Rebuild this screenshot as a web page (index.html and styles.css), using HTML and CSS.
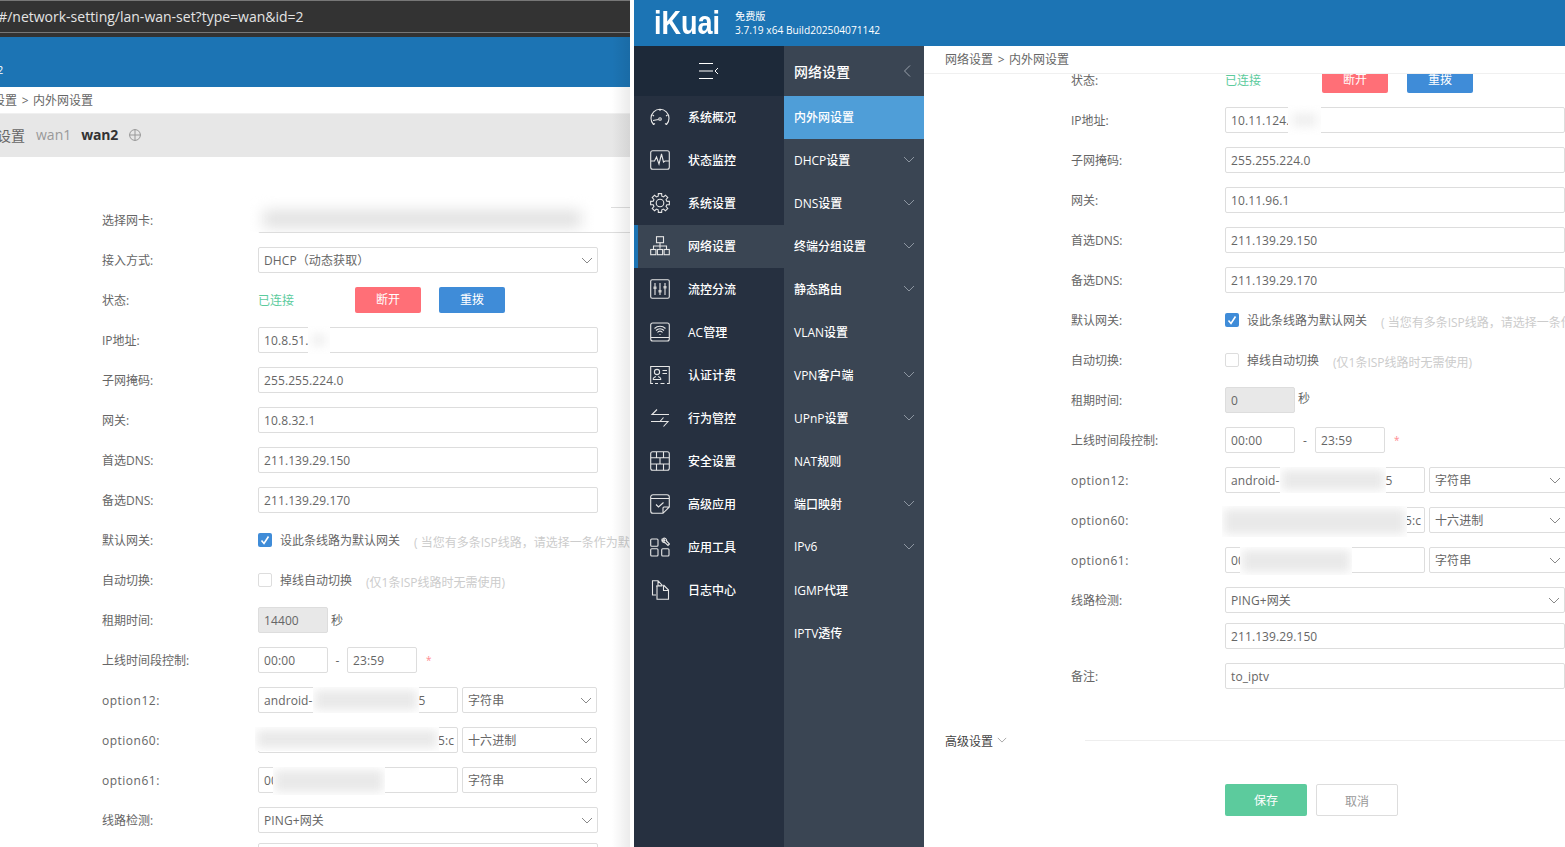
FILE: index.html
```html
<!DOCTYPE html>
<html lang="zh-CN">
<head>
    <meta charset="UTF-8">
    <title>iKuai 内外网设置</title>
    <link rel="stylesheet" href="styles.css">
</head>
<body>
    <svg class="defs" width="0" height="0">
        <symbol id="chev" viewBox="0 0 12 7"><path d="M1 1l5 5 5-5" fill="none" stroke="currentColor"/></symbol>
    </svg>

    <div class="win-left">
        <div class="urlbar"><span class="url">/#/network-setting/lan-wan-set?type=wan&amp;id=2</span></div>
        <div class="bluebar"><span class="bluebar-text">2</span></div>
        <div class="crumb crumb-cut">网络设置 <span class="crumb-sep">&gt;</span> 内外网设置</div>
        <div class="tabs">
            <span class="tab-title">内外网设置</span>
            <span class="tab">wan1</span>
            <span class="tab tab-on">wan2</span>
            <svg class="tab-add" width="12" height="12" viewBox="0 0 12 12"><circle cx="6" cy="6" r="5.4" fill="none" stroke="#999"/><path d="M6 0v12M0 6h12" stroke="#999"/></svg>
        </div>
        <div class="form">
            <div class="row">
                <div class="lbl">选择网卡:</div>
                <div class="input input-wide"><div class="mask mask-nic"></div></div>
            </div>
            <div class="row">
                <div class="lbl">接入方式:</div>
                <div class="select select-full">DHCP（动态获取）<svg class="arrow"><use href="#chev"/></svg></div>
            </div>
            <div class="row">
                <div class="lbl">状态:</div>
                <span class="state">已连接</span>
                <span class="btn btn-red">断开</span>
                <span class="btn btn-blue">重拨</span>
            </div>
            <div class="row">
                <div class="lbl">IP地址:</div>
                <div class="input">10.8.51.<div class="mask mask-ip-l"></div></div>
            </div>
            <div class="row"><div class="lbl">子网掩码:</div><div class="input">255.255.224.0</div></div>
            <div class="row"><div class="lbl">网关:</div><div class="input">10.8.32.1</div></div>
            <div class="row"><div class="lbl">首选DNS:</div><div class="input">211.139.29.150</div></div>
            <div class="row"><div class="lbl">备选DNS:</div><div class="input">211.139.29.170</div></div>
            <div class="row">
                <div class="lbl">默认网关:</div>
                <span class="check check-on"><svg width="14" height="14" viewBox="0 0 14 14"><path d="M3.5 7.5l2.5 3 4.5-7" fill="none" stroke="#fff" stroke-width="1.6"/></svg></span>
                <span class="check-text">设此条线路为默认网关</span>
                <span class="hint">( 当您有多条ISP线路，请选择一条作为默认网关</span>
            </div>
            <div class="row">
                <div class="lbl">自动切换:</div>
                <span class="check"></span>
                <span class="check-text">掉线自动切换</span>
                <span class="hint">(仅1条ISP线路时无需使用)</span>
            </div>
            <div class="row">
                <div class="lbl">租期时间:</div>
                <div class="input input-short input-off">14400</div>
                <span class="unit">秒</span>
            </div>
            <div class="row">
                <div class="lbl">上线时间段控制:</div>
                <div class="input input-short">00:00</div>
                <span class="dash">-</span>
                <div class="input input-short">23:59</div>
                <span class="star">*</span>
            </div>
            <div class="row">
                <div class="lbl lbl-opt">option12:</div>
                <div class="input input-half">android-<span class="tail-12">5</span><div class="mask mask-12"></div></div>
                <div class="select select-type">字符串<svg class="arrow"><use href="#chev"/></svg></div>
            </div>
            <div class="row">
                <div class="lbl lbl-opt">option60:</div>
                <div class="input input-half"><span class="tail-60">5:c</span><div class="mask mask-60-l"></div></div>
                <div class="select select-type">十六进制<svg class="arrow"><use href="#chev"/></svg></div>
            </div>
            <div class="row">
                <div class="lbl lbl-opt">option61:</div>
                <div class="input input-half">00<div class="mask mask-61"></div></div>
                <div class="select select-type">字符串<svg class="arrow"><use href="#chev"/></svg></div>
            </div>
            <div class="row">
                <div class="lbl">线路检测:</div>
                <div class="select select-full">PING+网关<svg class="arrow"><use href="#chev"/></svg></div>
            </div>
            <div class="row row-tight">
                <div class="lbl"></div>
                <div class="input">211.139.29.150</div>
            </div>
        </div>
        <div class="edge-shadow"></div>
    </div>

    <div class="win-right">
        <div class="head">
            <span class="logo">iKuai</span>
            <div class="edition">
                <div>免费版</div>
                <div>3.7.19 x64 Build202504071142</div>
            </div>
        </div>
        <div class="layout">
            <div class="nav1">
                <div class="nav1-top">
                    <svg width="22" height="18" viewBox="0 0 22 18"><path d="M1 1.5h14M1 9h14M1 16.5h14" stroke="#fff"/><path d="M20 6l-3 3 3 3" fill="none" stroke="#fff"/></svg>
                </div>
                <div class="nav1-item">
                    <svg class="ico" viewBox="0 0 20 20"><path d="M3.5 17.5A9 9 0 1 1 16.5 17.5M10 2v2M2.500 8l1.500 1M17.500 8l-1.500 1M3 13.500l5.500-1M15 16.500l1.500 1M3.500 17.500l1.500-1"/><circle cx="10" cy="12" r="1.300"/></svg>
                    <span>系统概况</span>
                </div>
                <div class="nav1-item">
                    <svg class="ico" viewBox="0 0 20 20"><rect x=".7" y=".7" width="18.600" height="18.600" rx="2"/><path d="M1 11h3.500l2-4 2.500 7 2.500-10 2 8 1.500-1H19"/></svg>
                    <span>状态监控</span>
                </div>
                <div class="nav1-item">
                    <svg class="ico" viewBox="0 0 20 20"><path d="M8.350 .64L11.650 .64L11.810 3.240L13.500 3.940L15.450 2.220L17.780 4.550L16.060 6.500L16.760 8.190L19.360 8.350L19.360 11.650L16.760 11.810L16.060 13.500L17.780 15.450L15.450 17.780L13.500 16.060L11.810 16.760L11.650 19.360L8.350 19.360L8.190 16.760L6.500 16.060L4.550 17.780L2.220 15.450L3.940 13.500L3.240 11.810L.64 11.650L.64 8.350L3.240 8.190L3.940 6.500L2.220 4.550L4.550 2.220L6.500 3.940L8.190 3.240Z"/><circle cx="10" cy="10" r="3.800"/></svg>
                    <span>系统设置</span>
                </div>
                <div class="nav1-item nav1-on">
                    <svg class="ico" viewBox="0 0 20 20"><rect x="6.500" y=".7" width="7" height="6"/><path d="M10 6.700v6M3.500 13v-3h13v3"/><rect x=".7" y="13.500" width="5.200" height="5.200"/><rect x="7.400" y="13.500" width="5.200" height="5.200"/><rect x="14.100" y="13.500" width="5.200" height="5.200"/></svg>
                    <span>网络设置</span>
                </div>
                <div class="nav1-item">
                    <svg class="ico" viewBox="0 0 20 20"><rect x=".7" y=".7" width="18.600" height="18.600" rx="1.500"/><path d="M5 4v12M10 4v12M15 4v12"/><path class="knob" d="M3.500 7.500h3v2.500h-3zM8.500 11h3v2.500h-3zM13.500 7h3v2.500h-3z"/></svg>
                    <span>流控分流</span>
                </div>
                <div class="nav1-item">
                    <svg class="ico" viewBox="0 0 20 20"><rect x=".7" y="1" width="18.600" height="18" rx="2"/><path d="M1 15.500h18M4.500 6.500a8 8 0 0 1 11 0M6 8.500a5.500 5.500 0 0 1 8 0M7.500 10.500a3 3 0 0 1 5 0M9.500 12.500h1"/></svg>
                    <span>AC管理</span>
                </div>
                <div class="nav1-item">
                    <svg class="ico" viewBox="0 0 20 20"><path d="M3 18.500H.7v-17h18.600v17H17M5 18.500h3M10.500 18.500h4"/><circle cx="7" cy="7" r="2.600"/><path d="M3 14.500c0-2 2-2.500 2.800-3M11 14.500c0-2-2-2.500-2.800-3M3 14.500h8M12.500 5.500h4.500M12.500 8.500h4.500"/></svg>
                    <span>认证计费</span>
                </div>
                <div class="nav1-item">
                    <svg class="ico" viewBox="0 0 20 20"><path d="M19 6.500H2L7 1.500M1 13.500h17l-4.500 5M10 13.500l3.500-4"/></svg>
                    <span>行为管控</span>
                </div>
                <div class="nav1-item">
                    <svg class="ico" viewBox="0 0 20 20"><rect x=".7" y=".7" width="18.600" height="18.600" rx="2"/><path d="M1 6.700h18M1 13h18M6.500 1v5.700M13.500 1v5.700M10 6.700V13M6.500 13v6.300M13.500 13v6.300"/></svg>
                    <span>安全设置</span>
                </div>
                <div class="nav1-item">
                    <svg class="ico" viewBox="0 0 20 20"><path d="M13 19.300H3a2.300 2.300 0 0 1-2.300-2.300V3A2.300 2.300 0 0 1 3 .7h14A2.300 2.300 0 0 1 19.300 3v10zM13 19.300V14a1 1 0 0 1 1-1h5.300M1 4.500h18M6 10.500l2.500 2.500 5-4.500"/></svg>
                    <span>高级应用</span>
                </div>
                <div class="nav1-item">
                    <svg class="ico" viewBox="0 0 20 20"><rect x=".7" y="2" width="7.300" height="7.300" rx="1"/><rect x=".7" y="11.700" width="7.300" height="7.300" rx="1"/><rect x="11.700" y="11.700" width="7.300" height="7.300" rx="1"/><path d="M12 2.500l2 2 1-1-2-2c2-1 4 .5 3.500 2.500l3 3-1.500 1.500-3-3c-2 .5-3.500-1-3-3z"/></svg>
                    <span>应用工具</span>
                </div>
                <div class="nav1-item">
                    <svg class="ico" viewBox="0 0 20 20"><path d="M6 15H2.500V.7H8l4.500 5M8 .7v5h4.500M6 6h6M7 6v13.300h11.500V10L13.500 5M13.500 5.500v5h5"/></svg>
                    <span>日志中心</span>
                </div>
            </div>
            <div class="nav2">
                <div class="nav2-top">网络设置<svg class="back" width="8" height="12" viewBox="0 0 8 12"><path d="M7 .5L1.500 6 7 11.500" fill="none" stroke="#9aa3ad"/></svg></div>
                <div class="nav2-item nav2-on">内外网设置</div>
                <div class="nav2-item">DHCP设置<svg class="more"><use href="#chev"/></svg></div>
                <div class="nav2-item">DNS设置<svg class="more"><use href="#chev"/></svg></div>
                <div class="nav2-item">终端分组设置<svg class="more"><use href="#chev"/></svg></div>
                <div class="nav2-item">静态路由<svg class="more"><use href="#chev"/></svg></div>
                <div class="nav2-item">VLAN设置</div>
                <div class="nav2-item">VPN客户端<svg class="more"><use href="#chev"/></svg></div>
                <div class="nav2-item">UPnP设置<svg class="more"><use href="#chev"/></svg></div>
                <div class="nav2-item">NAT规则</div>
                <div class="nav2-item">端口映射<svg class="more"><use href="#chev"/></svg></div>
                <div class="nav2-item">IPv6<svg class="more"><use href="#chev"/></svg></div>
                <div class="nav2-item">IGMP代理</div>
                <div class="nav2-item">IPTV透传</div>
            </div>
            <div class="main">
                <div class="crumb">网络设置 <span class="crumb-sep">&gt;</span> 内外网设置</div>
                <div class="scroll">
                    <div class="form form-r">
                        <div class="row">
                            <div class="lbl">状态:</div>
                            <span class="state">已连接</span>
                            <span class="btn btn-red">断开</span>
                            <span class="btn btn-blue">重拨</span>
                        </div>
                        <div class="row">
                            <div class="lbl">IP地址:</div>
                            <div class="input">10.11.124.<div class="mask mask-ip-r"></div></div>
                        </div>
                        <div class="row"><div class="lbl">子网掩码:</div><div class="input">255.255.224.0</div></div>
                        <div class="row"><div class="lbl">网关:</div><div class="input">10.11.96.1</div></div>
                        <div class="row"><div class="lbl">首选DNS:</div><div class="input">211.139.29.150</div></div>
                        <div class="row"><div class="lbl">备选DNS:</div><div class="input">211.139.29.170</div></div>
                        <div class="row">
                            <div class="lbl">默认网关:</div>
                            <span class="check check-on"><svg width="14" height="14" viewBox="0 0 14 14"><path d="M3.5 7.5l2.5 3 4.5-7" fill="none" stroke="#fff" stroke-width="1.6"/></svg></span>
                            <span class="check-text">设此条线路为默认网关</span>
                            <span class="hint">( 当您有多条ISP线路，请选择一条作为默认网关</span>
                        </div>
                        <div class="row">
                            <div class="lbl">自动切换:</div>
                            <span class="check"></span>
                            <span class="check-text">掉线自动切换</span>
                            <span class="hint">(仅1条ISP线路时无需使用)</span>
                        </div>
                        <div class="row">
                            <div class="lbl">租期时间:</div>
                            <div class="input input-short input-off">0</div>
                            <span class="unit">秒</span>
                        </div>
                        <div class="row">
                            <div class="lbl">上线时间段控制:</div>
                            <div class="input input-short">00:00</div>
                            <span class="dash">-</span>
                            <div class="input input-short">23:59</div>
                            <span class="star">*</span>
                        </div>
                        <div class="row">
                            <div class="lbl lbl-opt">option12:</div>
                            <div class="input input-half">android-<span class="tail-12">5</span><div class="mask mask-12"></div></div>
                            <div class="select select-type">字符串<svg class="arrow"><use href="#chev"/></svg></div>
                        </div>
                        <div class="row">
                            <div class="lbl lbl-opt">option60:</div>
                            <div class="input input-half"><span class="tail-60">5:c</span><div class="mask mask-60-r"></div></div>
                            <div class="select select-type">十六进制<svg class="arrow"><use href="#chev"/></svg></div>
                        </div>
                        <div class="row">
                            <div class="lbl lbl-opt">option61:</div>
                            <div class="input input-half">00<div class="mask mask-61"></div></div>
                            <div class="select select-type">字符串<svg class="arrow"><use href="#chev"/></svg></div>
                        </div>
                        <div class="row">
                            <div class="lbl">线路检测:</div>
                            <div class="select select-full">PING+网关<svg class="arrow"><use href="#chev"/></svg></div>
                        </div>
                        <div class="row row-tight">
                            <div class="lbl"></div>
                            <div class="input">211.139.29.150</div>
                        </div>
                        <div class="row">
                            <div class="lbl">备注:</div>
                            <div class="input">to_iptv</div>
                        </div>
                    </div>
                    <div class="advanced">
                        <span>高级设置</span>
                        <svg class="adv-chev"><use href="#chev"/></svg>
                        <div class="adv-line"></div>
                    </div>
                    <div class="actions">
                        <span class="btn-big btn-save">保存</span>
                        <span class="btn-big btn-cancel">取消</span>
                    </div>
                </div>
            </div>
        </div>
    </div>
</body>
</html>
```

FILE: styles.css
```css
* {
    box-sizing: border-box;
}
body {
    margin: 0;
    width: 1565px;
    height: 847px;
    overflow: hidden;
    display: flex;
    background-color: #fff;
    font-family: "Open Sans", "Noto Sans CJK SC", sans-serif;
    font-size: 12px;
    color: #666;
}
.defs {
    position: absolute;
}

/* left window */
.win-left {
    position: relative;
    width: 630px;
    height: 847px;
    flex: none;
    overflow: hidden;
}
.edge-shadow {
    position: absolute;
    top: 37px;
    right: 0;
    bottom: 0;
    width: 18px;
    background: linear-gradient(to right, rgba(0, 0, 0, 0), rgba(0, 0, 0, 0.08));
}
.urlbar {
    height: 37px;
    background-color: #333;
    border-top: 1px solid #777;
    padding-top: 1px;
}
.url {
    display: block;
    height: 31px;
    line-height: 29px;
    border-bottom: 1px solid #777;
    font-size: 14px;
    color: #e4e4e4;
    margin-left: -7px;
    white-space: nowrap;
}
.bluebar {
    height: 50px;
    background-color: #1c74b4;
    color: #fff;
    font-size: 11px;
    line-height: 14px;
    padding-top: 26px;
}
.bluebar-text {
    display: block;
    margin-left: -3px;
}
.crumb {
    height: 28px;
    line-height: 27px;
    padding-left: 21px;
    border-bottom: 1px solid #f0f0f0;
    color: #666;
    white-space: nowrap;
}
.crumb-cut {
    height: 27px;
    padding-left: 0;
    margin-left: -31px;
}
.crumb-sep {
    margin: 0 1.5px;
}
.tabs {
    height: 43px;
    padding-bottom: 2px;
    background-color: #e7e7e7;
    display: flex;
    align-items: center;
    font-size: 14px;
    color: #999;
    margin-left: -45px;
}
.tab-title {
    color: #666;
    width: 70px;
    white-space: nowrap;
}
.tab {
    margin-left: 11px;
}
.tab-on {
    color: #333;
    font-weight: 700;
    margin-left: 10px;
    letter-spacing: -0.2px;
}
.tab-add {
    margin-left: 11px;
}

/* form rows */
.form {
    padding: 43px 0 0 102px;
}
.form-r {
    padding: 0 0 0 147px;
    margin-top: -14px;
}
.row {
    height: 40px;
    display: flex;
    align-items: center;
    white-space: nowrap;
}
.row-tight {
    margin-top: -4px;
}
.lbl {
    width: 156px;
    flex: none;
    color: #666;
}
.lbl-opt {
    letter-spacing: 0.5px;
}
.form-r .lbl {
    width: 154px;
}
.input, .select {
    position: relative;
    height: 26px;
    line-height: 24px;
    border: 1px solid #ddd;
    border-radius: 2px;
    padding: 1px 5px 0;
    flex: none;
    background-color: #fff;
    letter-spacing: 0.1px;
}
.input {
    width: 340px;
}
.input-wide {
    width: 400px;
}
.input-short {
    width: 70px;
}
.input-half {
    width: 200px;
    overflow: visible;
}
.input-off {
    background-color: #e8e8e8;
}
.select-full {
    width: 340px;
}
.select-type {
    width: 135px;
    margin-left: 4px;
}
.form-r .select-type {
    width: 137px;
}
.arrow {
    position: absolute;
    right: 4px;
    top: 9px;
    width: 12px;
    height: 7px;
    color: #888;
}
.state {
    width: 97px;
    color: #5ccb9d;
}
.btn {
    width: 66px;
    height: 26px;
    line-height: 26px;
    text-align: center;
    color: #fff;
    border-radius: 2px;
}
.btn-red {
    background-color: #ff6f77;
}
.btn-blue {
    background-color: #3f8cd8;
    margin-left: 18px;
}
.form-r .btn-blue {
    margin-left: 19px;
}
.check {
    width: 14px;
    height: 14px;
    border: 1px solid #ddd;
    border-radius: 2px;
    flex: none;
}
.check-on {
    border: none;
    background-color: #3f8cd8;
}
.check-on svg {
    display: block;
}
.check-text {
    margin-left: 8px;
}
.hint {
    margin-left: 14px;
    color: #ccc;
    padding-top: 3px;
}
.unit {
    margin-left: 3px;
}
.form-r .unit {
    padding-bottom: 4px;
}
.dash {
    width: 19px;
    text-align: center;
}
.form-r .dash {
    width: 20px;
}
.star {
    margin-left: 9px;
    font-size: 10px;
    color: #ff8a90;
}
.tail-12 {
    margin-left: 106px;
}
.tail-60 {
    margin-left: 174px;
}

/* blurred parts of the screenshot */
.mask {
    position: absolute;
    overflow: hidden;
    background-color: #fff;
}
.mask::before {
    content: "";
    position: absolute;
    inset: 3px 2px;
    background-color: #e9e9e9;
    filter: blur(5px);
}
.mask-nic {
    left: -14px;
    top: -25px;
    width: 366px;
    height: 49px;
}
.mask-nic::before {
    inset: 27px 30px 4px 18px;
    background-color: #e2e2e2;
    filter: blur(7px);
}
.mask-ip-l {
    left: 49px;
    top: -2px;
    width: 22px;
    height: 28px;
}
.mask-ip-r {
    left: 62px;
    top: -3px;
    width: 33px;
    height: 30px;
}
.mask-ip-l::before, .mask-ip-r::before {
    background-color: #f0f0f0;
    inset: 8px 4px;
}
.mask-12 {
    left: 54px;
    top: -1px;
    width: 106px;
    height: 26px;
}
.mask-60-l {
    left: -4px;
    top: -1px;
    width: 184px;
    height: 24px;
}
.mask-60-r {
    left: -4px;
    top: -2px;
    width: 185px;
    height: 31px;
}
.mask-61 {
    left: 14px;
    top: -1px;
    width: 112px;
    height: 28px;
}

/* right window */
.win-right {
    margin-left: 4px;
    width: 931px;
    height: 847px;
    flex: none;
    display: flex;
    flex-direction: column;
    overflow: hidden;
}
.head {
    height: 46px;
    flex: none;
    background-color: #1c74b4;
    display: flex;
    align-items: center;
    color: #fff;
}
.logo {
    width: 101px;
    padding-left: 20px;
    font-family: "Liberation Sans", sans-serif;
    font-size: 27px;
    font-weight: 700;
    line-height: 46px;
    transform: scaleY(1.2);
    transform-origin: left center;
}
.edition {
    font-size: 10.2px;
    line-height: 14px;
    padding-bottom: 1px;
}
.layout {
    flex: 1;
    display: flex;
    min-height: 0;
}
.nav1 {
    width: 150px;
    flex: none;
    background-color: #263040;
    color: #fff;
    font-weight: 500;
}
.nav1-top {
    height: 50px;
    background-color: #1d2939;
    display: flex;
    align-items: center;
    justify-content: center;
}
.nav1-item {
    height: 43px;
    display: flex;
    align-items: center;
    padding: 0 0 2px 16px;
}
.nav1-item span {
    margin-left: 18px;
}
.nav1-on {
    background-color: #3a4553;
    border-left: 4px solid #1c74b4;
    padding-left: 12px;
}
.ico {
    width: 20px;
    height: 20px;
    flex: none;
    fill: none;
    stroke: #e6e6e6;
    stroke-width: 1.1;
}
.ico .knob {
    fill: #cfcfcf;
    stroke: none;
}
.nav2 {
    width: 140px;
    flex: none;
    background-color: #3a4553;
    color: #fff;
    font-weight: 500;
}
.nav2-top {
    height: 50px;
    display: flex;
    align-items: center;
    justify-content: space-between;
    padding: 0 13px 0 10px;
    font-size: 14px;
}
.nav2-item {
    height: 43px;
    display: flex;
    align-items: center;
    justify-content: space-between;
    padding: 0 9px 2px 10px;
}
.nav2-on {
    background-color: #4f9ed8;
}
.more {
    width: 12px;
    height: 7px;
    color: #8d96a1;
}
.main {
    flex: 1;
    min-width: 0;
    display: flex;
    flex-direction: column;
}
.scroll {
    flex: 1;
    overflow: hidden;
}
.advanced {
    display: flex;
    align-items: center;
    height: 20px;
    margin-top: 35px;
    padding-left: 21px;
    color: #444;
}
.adv-chev {
    width: 10px;
    height: 6px;
    margin: 0 0 2px 4px;
    color: #999;
}
.adv-line {
    flex: 1;
    height: 1px;
    margin: 0 0 2px 78px;
    background-color: #eee;
}
.actions {
    display: flex;
    gap: 9px;
    margin-top: 33px;
    padding-left: 301px;
}
.btn-big {
    width: 82px;
    height: 32px;
    line-height: 33px;
    text-align: center;
    border-radius: 2px;
}
.btn-save {
    background-color: #5ccb9d;
    color: #fff;
}
.btn-cancel {
    border: 1px solid #ddd;
    color: #999;
}
```
